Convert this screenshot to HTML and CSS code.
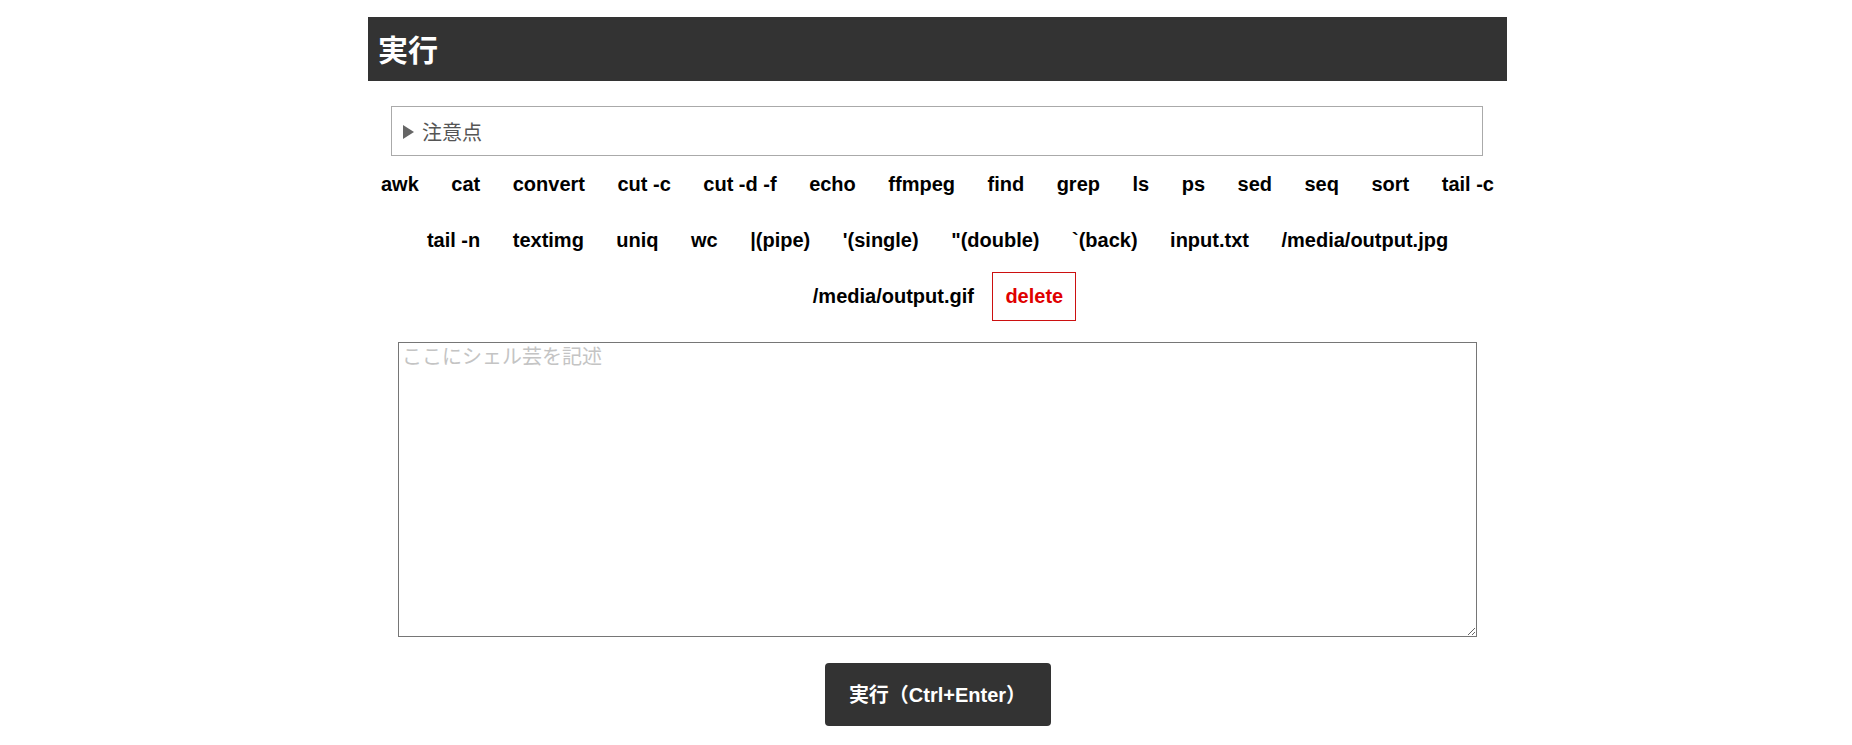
FILE: index.html
```html
<!DOCTYPE html>
<html lang="ja">
<head>
<meta charset="utf-8">
<title>実行</title>
<link rel="stylesheet" href="styles.css">
</head>
<body>
<div class="page">
  <h1 class="title">実行</h1>
  <details class="notes">
    <summary class="notes-summary">注意点</summary>
  </details>
  <div class="commands">
    <button class="cmd">awk</button>
    <button class="cmd">cat</button>
    <button class="cmd">convert</button>
    <button class="cmd">cut -c</button>
    <button class="cmd">cut -d -f</button>
    <button class="cmd">echo</button>
    <button class="cmd">ffmpeg</button>
    <button class="cmd">find</button>
    <button class="cmd">grep</button>
    <button class="cmd">ls</button>
    <button class="cmd">ps</button>
    <button class="cmd">sed</button>
    <button class="cmd">seq</button>
    <button class="cmd">sort</button>
    <button class="cmd">tail -c</button>
    <button class="cmd">tail -n</button>
    <button class="cmd">textimg</button>
    <button class="cmd">uniq</button>
    <button class="cmd">wc</button>
    <button class="cmd">|(pipe)</button>
    <button class="cmd">'(single)</button>
    <button class="cmd">"(double)</button>
    <button class="cmd">`(back)</button>
    <button class="cmd">input.txt</button>
    <button class="cmd">/media/output.jpg</button>
    <button class="cmd">/media/output.gif</button>
    <button class="cmd cmd-delete">delete</button>
  </div>
  <textarea class="editor" placeholder="ここにシェル芸を記述"></textarea>
  <button class="run">実行（Ctrl+Enter）</button>
</div>
</body>
</html>
```

FILE: styles.css
```css
html, body {
  margin: 0;
  padding: 0;
  background: #fff;
}

body {
  padding-left: 23px;
  font-family: "Liberation Sans", "Noto Sans CJK JP", sans-serif;
  color: #000;
}

.page {
  width: 1139px;
  margin: 17px auto 0;
}

.title {
  margin: 0;
  height: 64px;
  box-sizing: border-box;
  display: flex;
  align-items: center;
  padding: 4px 0 0 10px;
  background: #333;
  color: #fff;
  font-size: 30px;
  font-weight: bold;
  line-height: 1;
}

.notes {
  width: 1092px;
  box-sizing: border-box;
  margin: 25px 0 0 23px;
  border: 1px solid #aaa;
}

.notes-summary {
  display: flex;
  align-items: center;
  list-style: none;
  padding: 12px 11px 8px;
  font-size: 20px;
  line-height: 28px;
  color: #555;
  cursor: pointer;
}

.notes-summary::-webkit-details-marker {
  display: none;
}

.notes-summary::before {
  content: "";
  display: block;
  width: 0;
  height: 0;
  border-style: solid;
  border-width: 7px 0 7px 11px;
  border-color: transparent transparent transparent #666;
  margin: 0 8px 2px 0;
}

.commands {
  display: flex;
  flex-wrap: wrap;
  justify-content: center;
  gap: 7px 4.5px;
  margin: 4px -6px 0;
}

.cmd {
  font-family: "Liberation Sans", "Noto Sans CJK JP", sans-serif;
  font-size: 20px;
  font-weight: bold;
  line-height: 23px;
  padding: 12px 13px;
  border: 1px solid transparent;
  background: transparent;
  color: #000;
  margin: 0;
  cursor: pointer;
}

.cmd-delete {
  padding: 12px 12px;
  color: #e00000;
  border-color: #cc1010;
}

.editor {
  display: block;
  box-sizing: border-box;
  width: 1079px;
  height: 295px;
  margin: 21px 0 0 30px;
  padding: 2px 3px;
  border: 1px solid #767676;
  font-family: "Liberation Sans", "Noto Sans CJK JP", sans-serif;
  font-size: 20px;
  line-height: 24px;
  resize: both;
}

.editor::placeholder {
  color: #c4c4c4;
}

.run {
  display: block;
  width: 226px;
  height: 63px;
  margin: 26px auto 0;
  padding: 0 0 3px;
  border: none;
  border-radius: 4px;
  background: #333;
  color: #fff;
  font-family: "Liberation Sans", "Noto Sans CJK JP", sans-serif;
  font-size: 20px;
  font-weight: bold;
  cursor: pointer;
}
```
